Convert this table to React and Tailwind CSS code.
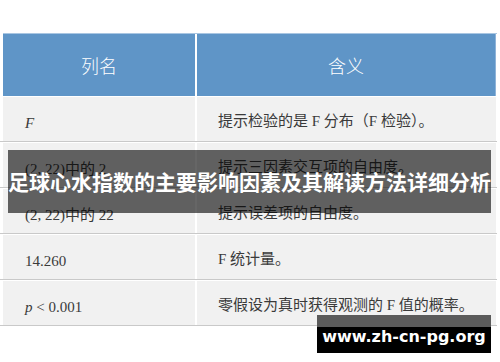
import React from 'react';

const rows = [
  { name: 'F', italic: true, meaning: '提示检验的是 F 分布（F 检验）。' },
  { name: '(2, 22)中的 2', meaning: '提示三因素交互项的自由度。' },
  { name: '(2, 22)中的 22', meaning: '提示误差项的自由度。' },
  { name: '14.260', meaning: 'F 统计量。' },
  { name: 'p', italic: true, tail: ' < 0.001', meaning: '零假设为真时获得观测的 F 值的概率。' },
];

const serif = { fontFamily: '"Liberation Serif", "Noto Sans CJK SC", serif' };

export default function App() {
  return (
    <div className="relative w-[500px] h-[362px] bg-white overflow-hidden">
      {/* Table */}
      <div className="pt-[33px] pl-[3px] w-[497px]">
        <div className="grid grid-cols-[192px_299px] gap-x-[2px] h-[63px] border-t border-[#a9c6e2]">
          <div className="bg-[#5f95c7] flex items-center justify-center text-white text-[18px] font-light" style={{ fontFamily: '"Noto Sans CJK SC", sans-serif' }}>
            列名
          </div>
          <div className="bg-[#5f95c7] flex items-center justify-center text-white text-[18px] font-light border-r border-[#8fb3d8]" style={{ fontFamily: '"Noto Sans CJK SC", sans-serif' }}>
            含义
          </div>
        </div>
        <div className="h-[1px]" />
        {rows.map((r, i) => (
          <div key={i} className="mb-[1px] border-b border-[#c9c9c9] -ml-[3px] pl-[3px]">
            <div className="grid grid-cols-[192px_299px] gap-x-[2px] h-[44px]">
              <div className="bg-[#f1f1f1] flex items-center pl-[22px] pt-[8px] text-[15px] text-[#3a3a3a]" style={serif}>
                {r.italic ? <i>{r.name}</i> : r.name}
                {r.tail && <span className="whitespace-pre">{r.tail}</span>}
              </div>
              <div className="bg-[#f1f1f1] flex items-center pl-[21px] pt-[4px] text-[15px] text-[#3a3a3a] whitespace-nowrap" style={serif}>
                {r.meaning}
              </div>
            </div>
          </div>
        ))}
      </div>

      {/* Title banner overlay */}
      <div className="absolute left-[8px] top-[150px] w-[483px] h-[63px] bg-black/60 flex items-center justify-center">
        <span className="text-white text-[21px] font-bold whitespace-nowrap" style={{ fontFamily: '"Noto Sans CJK SC", sans-serif' }}>
          足球心水指数的主要影响因素及其解读方法详细分析
        </span>
      </div>

      {/* Watermark */}
      <div className="absolute left-[317px] top-[315px] w-[174px] h-[38px] bg-[linear-gradient(#5b5b5b_0_12px,#000_12px)] flex items-center justify-center pt-[6px]">
        <span className="text-white text-[16px] font-bold" style={{ fontFamily: '"DejaVu Sans", sans-serif' }}>
          www.zh-cn-pg.org
        </span>
      </div>
    </div>
  );
}
